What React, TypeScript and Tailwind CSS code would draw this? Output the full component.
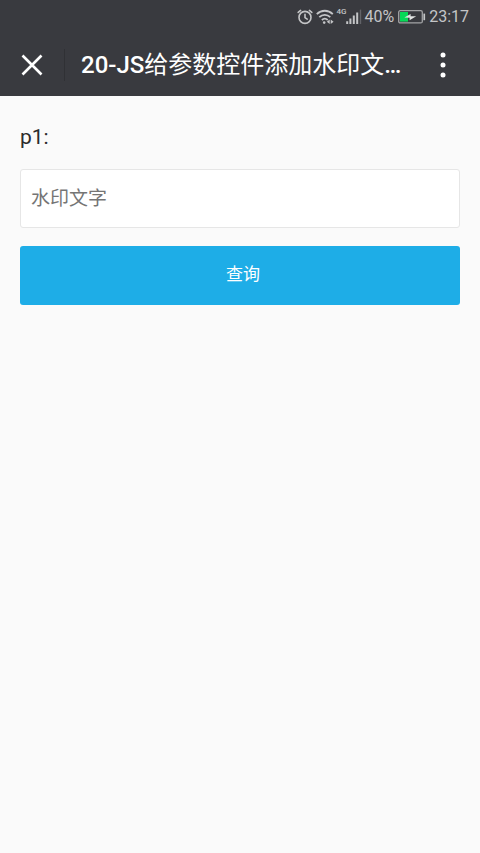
const AlarmIcon = () => (
  <svg
    viewBox="0 0 16 16"
    className="size-4"
    fill="none"
    stroke="currentColor"
    strokeWidth="1.6"
    strokeLinecap="round"
  >
    <circle cx="8" cy="8.4" r="6" />
    <path d="M8 5.4v3.2l2.2 1.5M1.2 3.4l2.4-2M14.8 3.4l-2.4-2" />
  </svg>
);

const WifiIcon = () => (
  <svg
    viewBox="0 0 18 16"
    className="h-4 w-[18px]"
    fill="none"
    stroke="currentColor"
    strokeWidth="1.8"
  >
    <path d="M.8 5.2C5.4.6 12.2.6 16.8 5.2M3.3 8.2c3.2-3.1 7.8-3.1 11 0M5.9 11c1.8-1.7 4-1.7 5.8 0" />
    <circle cx="8.2" cy="13.6" r="1.3" fill="currentColor" stroke="none" />
    <path
      d="M10.8 12.8l2.9-2.2v4.4zM17.6 12.8l-2.9-2.2v4.4z"
      fill="currentColor"
      stroke="none"
    />
  </svg>
);

const SignalIcon = () => (
  <svg viewBox="0 0 16 16" className="size-4" fill="currentColor">
    <path d="M.2 12.2h2V15h-2zM3.4 9.6h2V15h-2zM6.8 6.6h2V15h-2zM10.2 3.4h2V15h-2z" />
    <path d="M13.8 .6h1.4V15h-1.4z" opacity="0.3" />
  </svg>
);

const BatteryIcon = () => (
  <svg viewBox="0 0 28 14" className="h-[14px] w-7">
    <rect
      x="0.7"
      y="0.7"
      width="23.6"
      height="12.2"
      rx="1.5"
      fill="none"
      stroke="#a3a4a6"
      strokeWidth="1.3"
    />
    <path d="M2 2h8v9.6H2z" fill="#07d957" />
    <path d="M25.4 3.6h1.7v6.6h-1.7z" fill="#c4c5c7" />
    <path d="M6.4 7.6l6.2-3.6v2.2l5.6.1-6.6 4V7.8z" fill="#e2e5e4" />
  </svg>
);

const CloseIcon = () => (
  <svg
    viewBox="0 0 24 24"
    className="size-6"
    fill="none"
    stroke="currentColor"
    strokeWidth="2.6"
  >
    <path d="M2.5 2.5l19 19M21.5 2.5l-19 19" />
  </svg>
);

const MoreIcon = () => (
  <svg viewBox="0 0 6 26" className="h-[26px] w-[6px]" fill="currentColor">
    <circle cx="3" cy="3" r="2.5" />
    <circle cx="3" cy="13" r="2.5" />
    <circle cx="3" cy="23" r="2.5" />
  </svg>
);

const StatusBar = () => (
  <div className="flex h-[34px] items-center justify-end pr-[11px] text-base text-[#c4c5c7]">
    <AlarmIcon />
    <div className="ml-[3px]">
      <WifiIcon />
    </div>
    <span className="ml-[2px] self-start pt-2 text-[8px] leading-[8px] font-medium">
      4G
    </span>
    <SignalIcon />
    <span className="ml-[2px]">40%</span>
    <div className="mr-[3px] ml-1">
      <BatteryIcon />
    </div>
    <span>23:17</span>
  </div>
);

const TitleBar = () => (
  <div className="flex h-[62px] items-center text-white">
    <button
      type="button"
      aria-label="关闭"
      className="flex w-16 shrink-0 justify-center"
    >
      <CloseIcon />
    </button>
    <div className="h-8 w-px shrink-0 bg-[#303135]" />
    <h1 className="min-w-0 flex-1 truncate pl-4 text-2xl font-medium">
      20-JS<span className="font-normal">给参数控件添加水印文</span>…
    </h1>
    <button
      type="button"
      aria-label="更多"
      className="flex w-[74px] shrink-0 justify-center"
    >
      <MoreIcon />
    </button>
  </div>
);

export default function App() {
  return (
    <div className="min-h-screen bg-[#fafafa] font-['Roboto','Noto_Sans_CJK_SC',sans-serif]">
      <header className="bg-[#393a3f]">
        <StatusBar />
        <TitleBar />
      </header>

      <form
        className="flex flex-col px-5 pt-[25px]"
        onSubmit={(event) => event.preventDefault()}
      >
        <label htmlFor="p1" className="text-[21px] leading-8 text-[#2b2b2b]">
          p1:
        </label>
        <input
          id="p1"
          type="text"
          placeholder="水印文字"
          className="mt-4 h-[59px] w-full rounded-[3px] border border-[#e6e6e6] bg-white px-[10px] pb-px text-[19px] text-[#2b2b2b] outline-none placeholder:text-[#757575]"
        />
        <button
          type="submit"
          className="mt-[18px] h-[59px] w-full rounded-[3px] bg-[#1eade7] pb-px pl-[6px] text-[17px] text-white"
        >
          查询
        </button>
      </form>
    </div>
  );
}
